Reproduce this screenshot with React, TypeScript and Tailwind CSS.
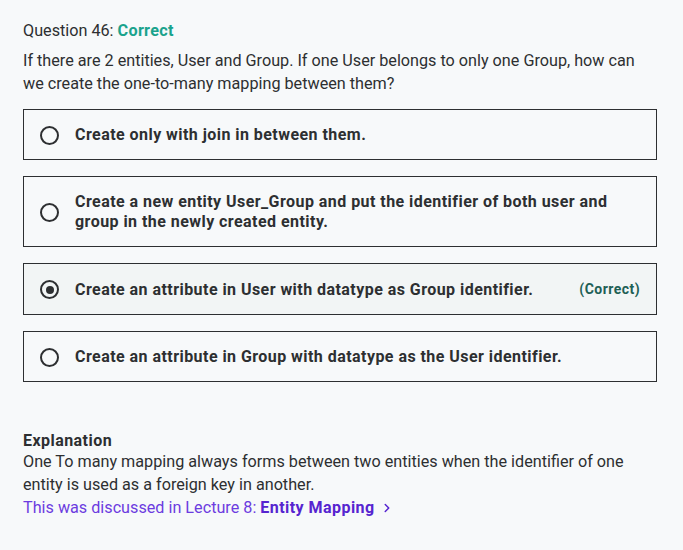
import { ChevronRight } from "lucide-react";

const options = [
  { text: "Create only with join in between them.", selected: false },
  {
    text: "Create a new entity User_Group and put the identifier of both user and group in the newly created entity.",
    selected: false,
  },
  { text: "Create an attribute in User with datatype as Group identifier.", selected: true, correct: true },
  { text: "Create an attribute in Group with datatype as the User identifier.", selected: false },
];

function Radio({ checked }: { checked: boolean }) {
  return (
    <span className="flex h-[19px] w-[19px] shrink-0 items-center justify-center rounded-full border-2 border-[#2d2f31]">
      {checked && <span className="h-[8px] w-[8px] rounded-full bg-[#2d2f31]" />}
    </span>
  );
}

export default function App() {
  return (
    <div
      className="min-h-[550px] w-full bg-[#f7f9fa] pl-[23px] pr-[26px] pt-[19px] text-[#2d2f31]"
      style={{ fontFamily: "Roboto, 'Liberation Sans', sans-serif" }}
    >
      <div className="text-[16.2px] leading-[23px]">
        Question 46: <span className="font-bold tracking-[0.3px] text-[#1aa38c]">Correct</span>
      </div>
      <p className="mt-[7px] text-[16.2px] leading-[23px]">
        If there are 2 entities, User and Group. If one User belongs to only one Group, how can we create the
        one-to-many mapping between them?
      </p>

      <ul className="mt-[14px] flex flex-col gap-[16px]">
        {options.map((o, i) => (
          <li
            key={i}
            className={`flex items-center gap-[16px] border border-[#2d2f31] px-[16px] pb-[14px] pt-[15px] ${
              o.selected ? "bg-[#f2f5f5]" : ""
            }`}
          >
            <Radio checked={o.selected} />
            <span className="flex-1 pr-[20px] text-[16px] font-bold leading-[20px] tracking-[0.45px]">{o.text}</span>
            {o.correct && (
              <span className="text-[14px] font-bold tracking-[0.45px] text-[#1e6055]">(Correct)</span>
            )}
          </li>
        ))}
      </ul>

      <div className="mt-[49px] text-[16.2px] leading-[23px]">
        <div className="text-[16px] font-bold leading-[19px] tracking-[0.45px]">Explanation</div>
        <p>
          One To many mapping always forms between two entities when the identifier of one entity is used as a
          foreign key in another.
        </p>
        <a className="flex items-center text-[#5624d0]">
          <span className="text-[#6c3ce0]">This was discussed in Lecture 8:&nbsp;</span>
          <span className="text-[16px] font-bold tracking-[0.45px]">Entity Mapping</span>
          <ChevronRight className="ml-[5px] h-[14px] w-[14px]" strokeWidth={2.5} />
        </a>
      </div>
    </div>
  );
}
